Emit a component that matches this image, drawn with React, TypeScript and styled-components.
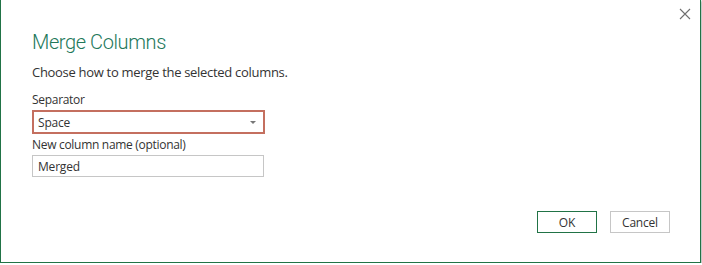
import React from "react";
import styled, { createGlobalStyle } from "styled-components";

const Global = createGlobalStyle`
  html, body { margin: 0; padding: 0; background: #fff; }
  body { font-family: "Open Sans", "Noto Sans", sans-serif; color: #333; }
`;

const Dialog = styled.div`
  box-sizing: border-box;
  width: 701px;
  height: 264px;
  margin-top: -1px;
  background: #fff;
  border: 1px solid #217346;
  box-shadow: 3px 2px 2px rgba(0, 0, 0, 0.22);
  display: flex;
  flex-direction: column;
  padding: 0 30px 0 31px;
`;

const TopBar = styled.div`
  display: flex;
  justify-content: flex-end;
  height: 28px;
  margin-right: -21px;
  padding-top: 8px;
  box-sizing: border-box;
`;

const CloseButton = styled.button`
  width: 12px;
  height: 12px;
  padding: 0;
  border: none;
  background: none;
  cursor: pointer;
  display: flex;
  svg { display: block; }
`;

const Title = styled.h1`
  margin: 0;
  font-family: Roboto, "Open Sans", sans-serif;
  font-size: 20px;
  font-weight: 300;
  letter-spacing: -0.4px;
  color: #23785a;
  line-height: 28px;
`;

const Subtitle = styled.p`
  margin: 7px 0 0;
  font-size: 13px;
  line-height: 18px;
  letter-spacing: -0.3px;
  color: #333;
`;

const Field = styled.div<{ $gap: number }>`
  display: flex;
  flex-direction: column;
  margin-top: ${(p) => p.$gap}px;
  width: 233px;
`;

const Label = styled.label`
  font-size: 12px;
  line-height: 16px;
  letter-spacing: -0.3px;
  color: #333;
  margin-bottom: 2px;
`;

const Select = styled.div`
  box-sizing: border-box;
  height: 24px;
  border: 2px solid #c46f5f;
  display: flex;
  align-items: center;
  justify-content: space-between;
  padding: 0 7px 0 4px;
  font-size: 12px;
  letter-spacing: -0.2px;
  color: #333;
`;

const Caret = styled.span`
  width: 0;
  height: 0;
  border-left: 3px solid transparent;
  border-right: 3px solid transparent;
  border-top: 3px solid #777;
`;

const Input = styled.input`
  box-sizing: border-box;
  height: 22px;
  width: 232px;
  border: 1px solid #c6c6c6;
  padding: 0 5px;
  font: inherit;
  font-size: 12px;
  letter-spacing: -0.2px;
  color: #333;
  outline: none;
`;

const Footer = styled.div`
  display: flex;
  justify-content: flex-end;
  gap: 13px;
  margin-top: 34px;
`;

const Button = styled.button<{ $primary?: boolean }>`
  box-sizing: border-box;
  width: 60px;
  height: 22px;
  background: #fff;
  border: 1px solid ${(p) => (p.$primary ? "#217346" : "#c6c6c6")};
  font-family: inherit;
  font-size: 12px;
  letter-spacing: -0.2px;
  color: #333;
  padding: 0;
  cursor: pointer;
`;

export default function App() {
  return (
    <>
      <Global />
      <Dialog>
        <TopBar>
          <CloseButton aria-label="Close">
            <svg width="12" height="12" viewBox="0 0 12 12">
              <path d="M1 1 L11 11 M11 1 L1 11" stroke="#6f6f6f" strokeWidth="1.1" fill="none" />
            </svg>
          </CloseButton>
        </TopBar>
        <Title>Merge Columns</Title>
        <Subtitle>Choose how to merge the selected columns.</Subtitle>
        <Field $gap={11}>
          <Label>Separator</Label>
          <Select>
            <span>Space</span>
            <Caret />
          </Select>
        </Field>
        <Field $gap={3}>
          <Label>New column name (optional)</Label>
          <Input defaultValue="Merged" />
        </Field>
        <Footer>
          <Button $primary>OK</Button>
          <Button>Cancel</Button>
        </Footer>
      </Dialog>
    </>
  );
}
